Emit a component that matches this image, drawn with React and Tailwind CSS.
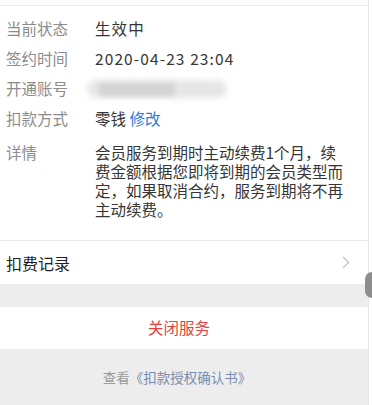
const rows = [
  { label: '当前状态', value: '生效中' },
  { label: '签约时间', value: '2020-04-23 23:04' },
  { label: '开通账号', value: null },
  { label: '扣款方式', value: 'pay' }
]

const App = () => {
  return (
    <div
      className="relative w-[372px] h-[405px] overflow-hidden bg-white"
      style={{ fontFamily: '"Noto Sans CJK SC", "Noto Sans", sans-serif' }}
    >
      <div className="w-[369px] h-full border-r border-[#e6e6e6] flex flex-col">
        <div className="h-[6px] border-b border-[#ececec]" />

        <div className="px-[6px] pt-[8px]">
          {rows.map((row) => (
            <div key={row.label} className="flex items-center h-[30px] text-[15.5px]">
              <span className="w-[89px] shrink-0 text-[#8c8c8c]">{row.label}</span>
              {row.value === 'pay' ? (
                <span className="text-[#353535]">
                  零钱 <span className="text-[#2f7ddb]">修改</span>
                </span>
              ) : row.value ? (
                <span className="text-[#353535] tracking-[1.1px]">{row.value}</span>
              ) : (
                <span className="relative w-[146px] h-[28px] -ml-[10px]">
                  <span className="absolute left-[2px] top-[5px] w-[140px] h-[18px] rounded-full bg-[#e6e6e6] blur-[3px]" />
                  <span className="absolute left-[14px] top-[8px] w-[76px] h-[13px] bg-[#d4d4d4] blur-[2px]" />
                </span>
              )}
            </div>
          ))}

          <div className="flex text-[15.5px] leading-[19px] pt-[8.5px] pb-[21.5px]">
            <span className="w-[89px] shrink-0 text-[#8c8c8c]">详情</span>
            <p className="w-[251px] text-[#353535]">
              会员服务到期时主动续费1个月，续费金额根据您即将到期的会员类型而定，如果取消合约，服务到期将不再主动续费。
            </p>
          </div>
        </div>

        <div className="flex items-center justify-between h-[44px] px-[6px] border-t border-[#e8e8e8] bg-white">
          <span className="text-[16px] text-[#1f1f1f]">扣费记录</span>
          <svg width="8" height="13" viewBox="0 0 8 13" className="mr-[12px]">
            <path d="M1 1l5.5 5.5L1 12" fill="none" stroke="#c4c4c4" strokeWidth="1.4" />
          </svg>
        </div>

        <div className="h-[23px] bg-[#ededed]" />

        <div className="flex items-center justify-center h-[42px] pr-[10px] bg-white">
          <span className="text-[15.5px] text-[#e5413e]">关闭服务</span>
        </div>

        <div className="flex-1 bg-[#ededed] flex justify-center pt-[19px] pr-[14px]">
          <span className="text-[13.5px] leading-[18px] text-[#9a9a9a]">
            查看<span className="text-[#7a8cae]">《扣款授权确认书》</span>
          </span>
        </div>
      </div>

      <div className="absolute right-0 top-[272px] w-[7px] h-[26px] rounded-l-full bg-[#8e8e8e]" />
    </div>
  )
}

export default App
